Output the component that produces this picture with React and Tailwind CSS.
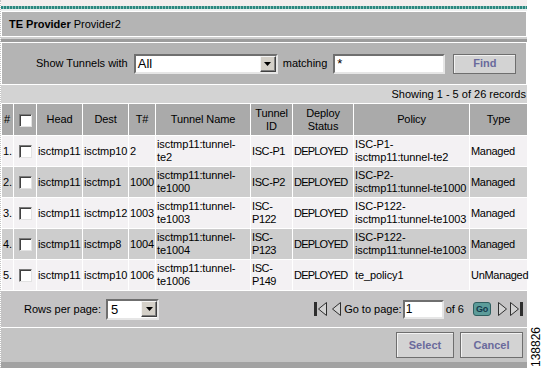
import React from "react";

const rows = [
  { n: "1.", head: "isctmp11", dest: "isctmp10", t: "2", name: ["isctmp11:tunnel-", "te2"], id: ["ISC-P1"], policy: ["ISC-P1-", "isctmp11:tunnel-te2"], type: "Managed" },
  { n: "2.", head: "isctmp11", dest: "isctmp1", t: "1000", name: ["isctmp11:tunnel-", "te1000"], id: ["ISC-P2"], policy: ["ISC-P2-", "isctmp11:tunnel-te1000"], type: "Managed" },
  { n: "3.", head: "isctmp11", dest: "isctmp12", t: "1003", name: ["isctmp11:tunnel-", "te1003"], id: ["ISC-", "P122"], policy: ["ISC-P122-", "isctmp11:tunnel-te1003"], type: "Managed" },
  { n: "4.", head: "isctmp11", dest: "isctmp8", t: "1004", name: ["isctmp11:tunnel-", "te1004"], id: ["ISC-", "P123"], policy: ["ISC-P122-", "isctmp11:tunnel-te1003"], type: "Managed" },
  { n: "5.", head: "isctmp11", dest: "isctmp10", t: "1006", name: ["isctmp11:tunnel-", "te1006"], id: ["ISC-", "P149"], policy: ["te_policy1"], type: "UnManaged" },
];

function Checkbox() {
  return (
    <span className="inline-block w-[13px] h-[13px] align-middle bg-white border border-t-[#7b7b7b] border-l-[#7b7b7b] border-r-[#e2e2e2] border-b-[#e2e2e2] shadow-[inset_1px_1px_0_#404040]" />
  );
}

function DropArrow() {
  return (
    <span className="flex w-[16px] h-[16px] items-center justify-center bg-[#d4d0c8] border border-t-[#f4f4f4] border-l-[#f4f4f4] border-r-[#404040] border-b-[#404040] shadow-[inset_-1px_-1px_0_#808080]">
      <svg width="7" height="4" viewBox="0 0 7 4">
        <path d="M0 0h7L3.5 4z" fill="#000" />
      </svg>
    </span>
  );
}

function Lines({ lines }) {
  return lines.map((l, i) => (
    <div key={i} className="leading-[13px]">
      {l}
    </div>
  ));
}

function PageIcon({ dir, end }) {
  const w = end ? 13 : 9;
  const left = dir === "left";
  let pts;
  if (end) pts = left ? "12.5,0.5 4.5,7 12.5,13.5" : "0.5,0.5 8.5,7 0.5,13.5";
  else pts = left ? "8.5,0.5 0.5,7 8.5,13.5" : "0.5,0.5 8.5,7 0.5,13.5";
  return (
    <svg width={w} height="14" viewBox={`0 0 ${w} 14`}>
      {end && <rect x={left ? 0 : 10} y="0" width="3" height="14" fill="#2e2e2e" />}
      <polygon points={pts} fill="#d2d2d2" stroke="#2e2e2e" strokeWidth="1" />
    </svg>
  );
}

function Button({ children, w }) {
  return (
    <button className={`${w} h-[26px] bg-[#d3d3d3] border border-[#6e6e6e] shadow-[inset_1px_1px_0_#f2f2f2] text-[11px] font-bold text-[#6a6a9c]`}>
      {children}
    </button>
  );
}

export default function App() {
  return (
    <div className="w-[544px] h-[368px] bg-white flex overflow-hidden font-['Liberation_Sans',Arial,sans-serif] text-[11px] text-black">
      <div className="w-[527px] flex flex-col border-l border-dotted border-[#c4c4c4]">
        <div className="h-[6px] bg-[#f3eeee]" />
        <div className="h-[3px] bg-[repeating-linear-gradient(90deg,#2c877f_0_2px,#8cc0ba_2px_3px)]" />
        <div className="h-[2px] bg-[#eef0f0]" />

        <div className="h-[26px] flex items-center pl-[7px] bg-[#b4b4b4] border border-white">
          <span className="font-bold">TE Provider</span>
          <span className="ml-[3px]">Provider2</span>
        </div>
        <div className="h-[2px] bg-[#cfcfcf]" />
        <div className="h-[3px] bg-[#9c9c9c]" />

        <div className="h-[43px] flex items-center bg-[#b4b4b4] border border-white">
          <span className="ml-[34px]">Show Tunnels with</span>
          <div className="ml-[6px] w-[144px] h-[20px] flex items-center justify-between bg-white border-2 border-t-[#6f6f6f] border-l-[#6f6f6f] border-r-[#e6e6e6] border-b-[#e6e6e6]">
            <span className="pl-[2px] text-[13px] leading-none">All</span>
            <DropArrow />
          </div>
          <span className="ml-[5px]">matching</span>
          <div className="ml-[6px] w-[112px] h-[20px] flex items-center bg-white border-2 border-t-[#6f6f6f] border-l-[#6f6f6f] border-r-[#e6e6e6] border-b-[#e6e6e6]">
            <span className="pl-[2px] text-[13px] leading-none">*</span>
          </div>
          <button className="ml-[8px] w-[63px] h-[20px] bg-[#d3d3d3] border border-[#6e6e6e] shadow-[inset_1px_1px_0_#f2f2f2] font-bold text-[#6a6a9c]">
            Find
          </button>
        </div>

        <div className="h-[18px] flex items-center justify-end pr-[1px] bg-[#d3d3d3]">
          Showing 1 - 5 of 26 records
        </div>

        <table className="w-[526px] table-fixed border-collapse tracking-[-0.1px]">
          <colgroup>
            <col className="w-[12px]" />
            <col className="w-[23px]" />
            <col className="w-[46px]" />
            <col className="w-[46px]" />
            <col className="w-[27px]" />
            <col className="w-[95px]" />
            <col className="w-[42px]" />
            <col className="w-[61px]" />
            <col className="w-[116px]" />
            <col className="w-[58px]" />
          </colgroup>
          <thead>
            <tr className="h-[32px] bg-[#aaaaaa]">
              <th className="border border-white font-normal text-left pl-[2px]">#</th>
              <th className="border border-white font-normal">
                <Checkbox />
              </th>
              <th className="border border-white font-normal">Head</th>
              <th className="border border-white font-normal">Dest</th>
              <th className="border border-white font-normal">T#</th>
              <th className="border border-white font-normal">Tunnel Name</th>
              <th className="border border-white font-normal leading-[13px]">
                <Lines lines={["Tunnel", "ID"]} />
              </th>
              <th className="border border-white font-normal leading-[13px]">
                <Lines lines={["Deploy", "Status"]} />
              </th>
              <th className="border border-white font-normal">Policy</th>
              <th className="border border-white font-normal">Type</th>
            </tr>
          </thead>
          <tbody>
            {rows.map((r, i) => (
              <tr key={r.n} className={`h-[31px] ${i % 2 === 0 ? "bg-[#f3f1f3]" : "bg-[#cdcdcd]"}`}>
                <td className="border border-white pl-[1px] whitespace-nowrap">{r.n}</td>
                <td className="border border-white text-center">
                  <Checkbox />
                </td>
                <td className="border border-white pl-[1px] whitespace-nowrap">{r.head}</td>
                <td className="border border-white pl-[1px] whitespace-nowrap">{r.dest}</td>
                <td className="border border-white pl-[1px] whitespace-nowrap">{r.t}</td>
                <td className="border border-white pl-[1px] whitespace-nowrap">
                  <Lines lines={r.name} />
                </td>
                <td className="border border-white pl-[1px] whitespace-nowrap tracking-[-0.4px]">
                  <Lines lines={r.id} />
                </td>
                <td className="border border-white pl-[1px] whitespace-nowrap tracking-[-0.8px]">DEPLOYED</td>
                <td className="border border-white pl-[1px] whitespace-nowrap">
                  <Lines lines={r.policy} />
                </td>
                <td className="border border-white pl-[1px] whitespace-nowrap tracking-[-0.3px]">{r.type}</td>
              </tr>
            ))}
          </tbody>
        </table>

        <div className="h-[37px] flex items-center justify-between bg-[#c4c3c4] border-b border-white">
          <div className="flex items-center pl-[23px]">
            <span>Rows per page:</span>
            <div className="ml-[5px] w-[53px] h-[21px] flex items-center justify-between bg-white border-2 border-t-[#6f6f6f] border-l-[#6f6f6f] border-r-[#e6e6e6] border-b-[#e6e6e6]">
              <span className="pl-[3px] text-[13px] leading-none">5</span>
              <DropArrow />
            </div>
          </div>
          <div className="flex items-center pr-[4px]">
            <PageIcon dir="left" end />
            <span className="ml-[5px] flex">
              <PageIcon dir="left" />
            </span>
            <span className="ml-[3px]">Go to page:</span>
            <div className="ml-[1px] w-[41px] h-[19px] flex items-center bg-white border-2 border-t-[#6f6f6f] border-l-[#6f6f6f] border-r-[#e6e6e6] border-b-[#e6e6e6]">
              <span className="pl-[1px] text-[12px] leading-none">1</span>
            </div>
            <span className="ml-[2px]">of 6</span>
            <span className="ml-[9px] w-[18px] h-[14px] flex items-center justify-center rounded-[3px] bg-[#5c9c9a] border border-[#2f5f60] text-[9px] font-bold text-[#13384a] leading-none tracking-[-0.3px]">
              Go
            </span>
            <span className="ml-[7px] flex">
              <PageIcon dir="right" />
            </span>
            <span className="ml-[3px] flex">
              <PageIcon dir="right" end />
            </span>
          </div>
        </div>

        <div className="flex-1 flex items-center justify-end gap-[6px] pr-[4px] bg-[#c4c4c4]">
          <Button w="w-[58px]">Select</Button>
          <Button w="w-[63px]">Cancel</Button>
        </div>
        <div className="h-[6px] bg-[#a2a2a2]" />
      </div>
      <div className="flex-1 flex flex-col justify-end items-center pb-[1px]">
        <span className="[writing-mode:vertical-rl] rotate-180 text-[12px] leading-none">138826</span>
      </div>
    </div>
  );
}
